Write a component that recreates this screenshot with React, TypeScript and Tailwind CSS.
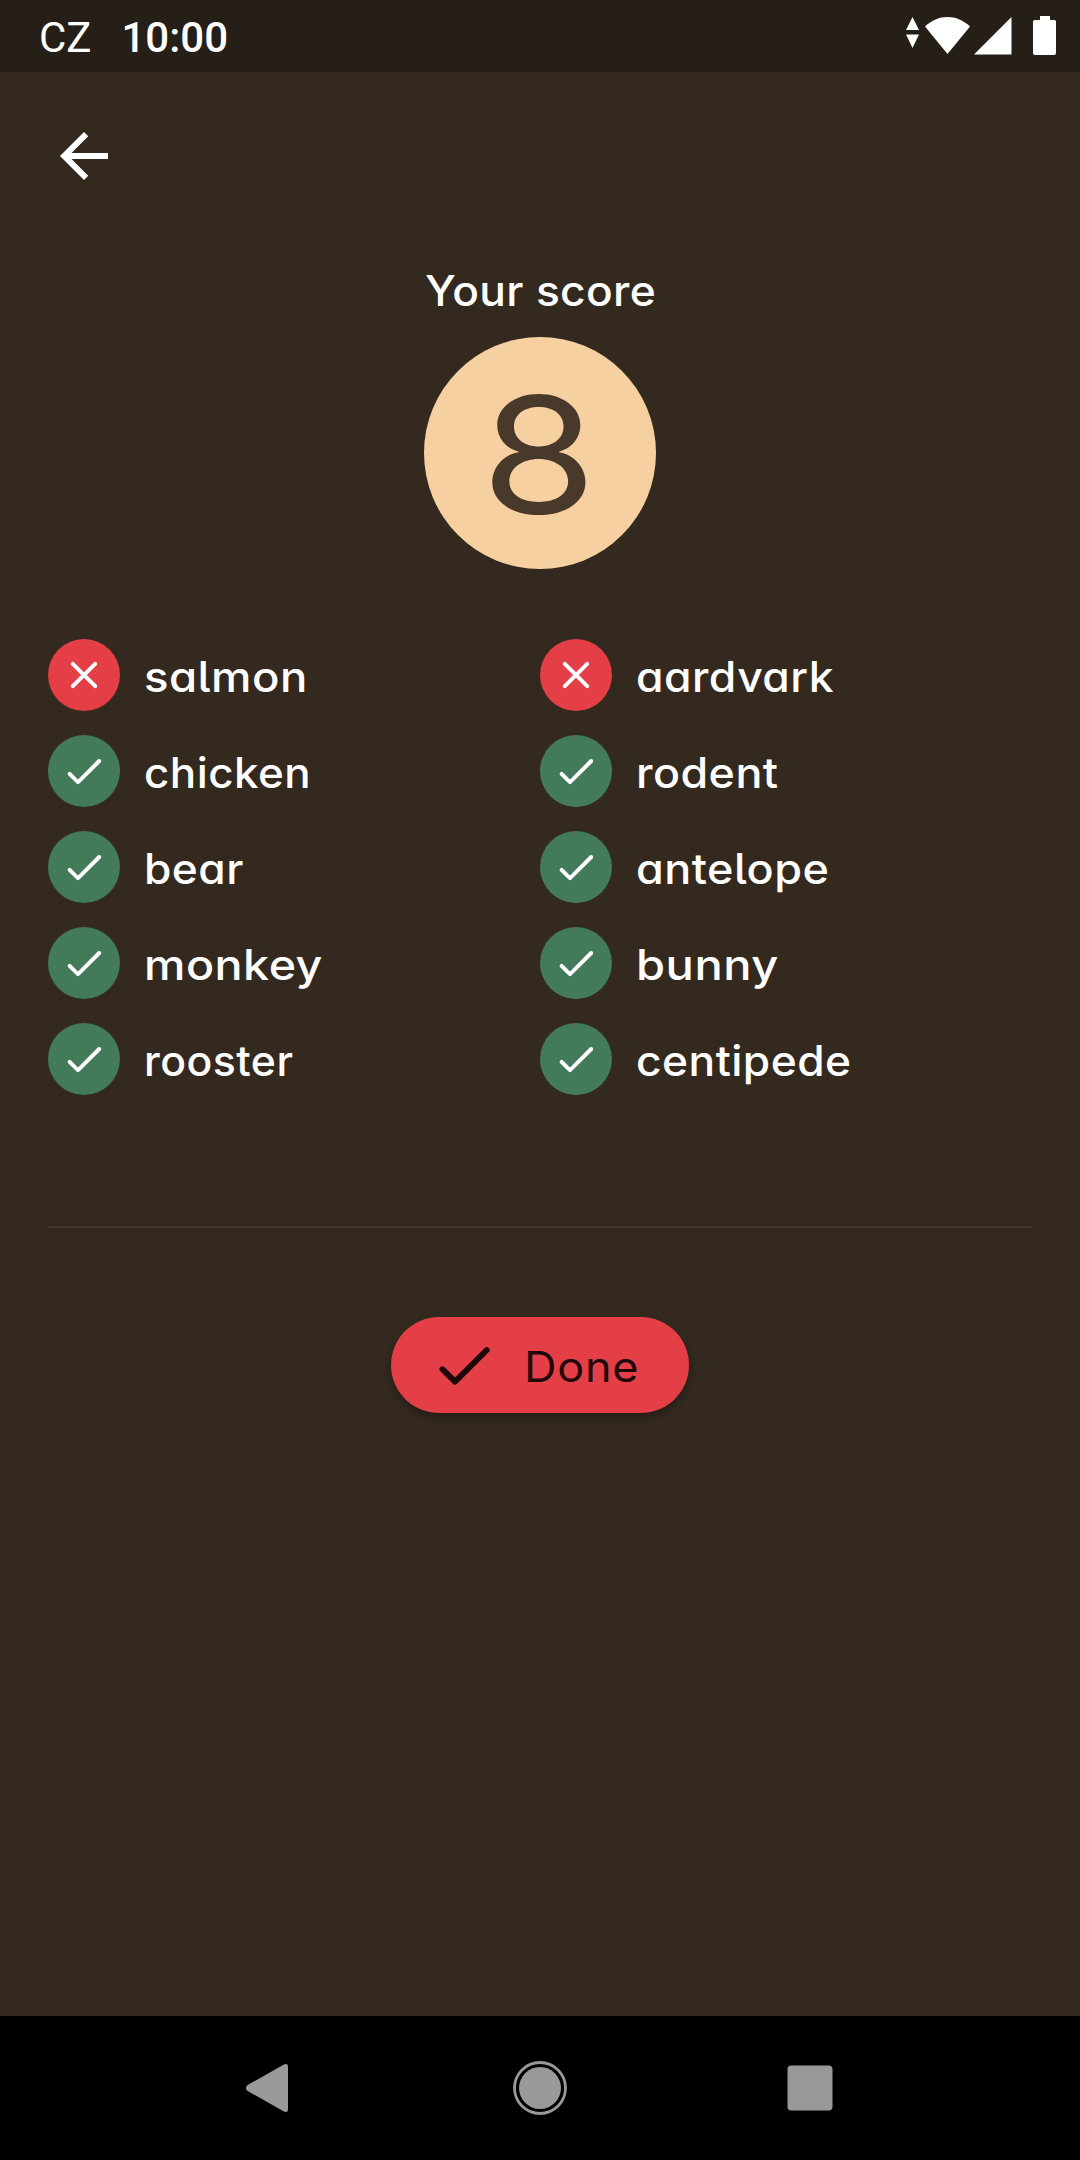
type Answer = { word: string; correct: boolean; stretch: string };

const left: Answer[] = [
  { word: "salmon", correct: false, stretch: "scale-x-[1.083]" },
  { word: "chicken", correct: true, stretch: "scale-x-[1.045]" },
  { word: "bear", correct: true, stretch: "scale-x-[1.055]" },
  { word: "monkey", correct: true, stretch: "scale-x-[1.110]" },
  { word: "rooster", correct: true, stretch: "scale-x-[1.018]" },
];

const right: Answer[] = [
  { word: "aardvark", correct: false, stretch: "scale-x-[1.060]" },
  { word: "rodent", correct: true, stretch: "scale-x-[1.066]" },
  { word: "antelope", correct: true, stretch: "scale-x-[1.070]" },
  { word: "bunny", correct: true, stretch: "scale-x-[1.120]" },
  { word: "centipede", correct: true, stretch: "scale-x-[1.055]" },
];

function CheckIcon({ className }: { className: string }) {
  return (
    <svg viewBox="0 0 24 24" fill="currentColor" className={className}>
      <path d="M9 16.2l-3.5-3.5c-.39-.39-1.01-.39-1.4 0-.39.39-.39 1.01 0 1.4l4.19 4.19c.39.39 1.02.39 1.41 0L20.3 7.7c.39-.39.39-1.01 0-1.4-.39-.39-1.01-.39-1.4 0L9 16.2z" />
    </svg>
  );
}

function CrossIcon({ className }: { className: string }) {
  return (
    <svg viewBox="0 0 24 24" fill="currentColor" className={className}>
      <path d="M18.3 5.71c-.39-.39-1.02-.39-1.41 0L12 10.59 7.11 5.7c-.39-.39-1.02-.39-1.41 0-.39.39-.39 1.02 0 1.41L10.59 12 5.7 16.89c-.39.39-.39 1.02 0 1.41.39.39 1.02.39 1.41 0L12 13.41l4.89 4.89c.39.39 1.02.39 1.41 0 .39-.39.39-1.02 0-1.41L13.41 12l4.89-4.89c.38-.38.38-1.02 0-1.4z" />
    </svg>
  );
}

function StatusBar() {
  return (
    <header className="flex h-[72px] items-center bg-[#261f17] pr-6 pl-[39px] font-[Roboto,sans-serif] text-[42px] leading-[72px] text-white">
      <span className="pt-[3px]">CZ</span>
      <span className="ml-[30px] pt-[3px] font-medium">10:00</span>
      <svg viewBox="0 0 150 40" fill="currentColor" className="ml-auto h-10 w-[150px]">
        <path d="M6.5 1 13 14H0zM0 18.5h13L6.5 32z" />
        <path d="M19 10.5C32 -2.3 51 -2.3 64 10.5L41.5 38z" />
        <path d="M105.5 1v37.5H68z" />
        <path d="M134 0h10v4h4.5a1.5 1.5 0 0 1 1.5 1.5v31.5a2 2 0 0 1-2 2h-19a2 2 0 0 1-2-2V5.5A1.5 1.5 0 0 1 128.5 4H134z" />
      </svg>
    </header>
  );
}

function AnswerColumn({ answers }: { answers: Answer[] }) {
  return (
    <ul className="flex flex-1 flex-col gap-6">
      {answers.map(({ word, correct, stretch }) => (
        <li key={word} className="flex h-[72px] items-center gap-6">
          <span
            className={`flex size-[72px] items-center justify-center rounded-full ${correct ? "bg-[#437b5a]" : "bg-[#e43f46]"}`}
          >
            {correct ? <CheckIcon className="size-12" /> : <CrossIcon className="size-12" />}
          </span>
          <span className={`origin-left pt-1 text-[42px] leading-[50px] font-[450] tracking-[0.45px] ${stretch}`}>
            {word}
          </span>
        </li>
      ))}
    </ul>
  );
}

function NavigationBar() {
  return (
    <footer className="flex h-36 items-center justify-center gap-[198px] bg-black text-[#999]">
      <svg viewBox="0 0 72 72" fill="currentColor" className="size-[72px]">
        <path d="M13.2 33.2 49.5 12.8Q54 10.5 54 15V57Q54 61.5 49.5 59.2L13.2 38.8Q10.8 36 13.2 33.2z" />
      </svg>
      <svg viewBox="0 0 72 72" fill="currentColor" className="size-[72px]">
        <circle cx="36" cy="36" r="25.5" fill="none" stroke="currentColor" strokeWidth="2.8" />
        <circle cx="36" cy="36" r="21" />
      </svg>
      <svg viewBox="0 0 72 72" fill="currentColor" className="size-[72px]">
        <rect x="13.5" y="13.5" width="45" height="45" rx="4" />
      </svg>
    </footer>
  );
}

export default function App() {
  return (
    <div className="flex h-[2160px] w-[1080px] flex-col bg-[#33291f] font-[Inter,sans-serif] text-white [font-feature-settings:'cv05','cv11']">
      <StatusBar />
      <main className="flex flex-1 flex-col px-12 pt-12">
        <button className="size-[72px]" aria-label="Back">
          <svg viewBox="0 0 24 24" fill="currentColor" className="size-full">
            <path d="M20 11H7.83l5.59-5.59L12 4l-8 8 8 8 1.41-1.41L7.83 13H20z" />
          </svg>
        </button>
        <section className="mt-[73px] flex flex-col items-center">
          <h1 className="h-[72px] scale-x-[1.055] text-[42px] leading-[52px] font-[450] tracking-[0.3px]">Your score</h1>
          <div className="flex size-[232px] items-center justify-center rounded-full bg-[#f6d0a1] text-[162px] leading-none text-[#49392b]">
            <span className="scale-x-[1.15] pt-px pr-[2px]">8</span>
          </div>
        </section>
        <section className="mt-[70px] flex">
          <AnswerColumn answers={left} />
          <AnswerColumn answers={right} />
        </section>
        <hr className="mt-[131px] h-[2px] border-0 bg-[#40362d]" />
        <button className="mt-[89px] flex h-24 w-[298px] items-center self-center rounded-full bg-[#e43f46] pl-[37px] text-[#20080a] shadow-[0_4px_8px_rgba(0,0,0,0.3)]">
          <CheckIcon className="size-[72px]" />
          <span className="ml-6 origin-left scale-x-[1.07] pt-1 text-[42px] leading-[50px] tracking-[0.7px]">Done</span>
        </button>
      </main>
      <NavigationBar />
    </div>
  );
}
